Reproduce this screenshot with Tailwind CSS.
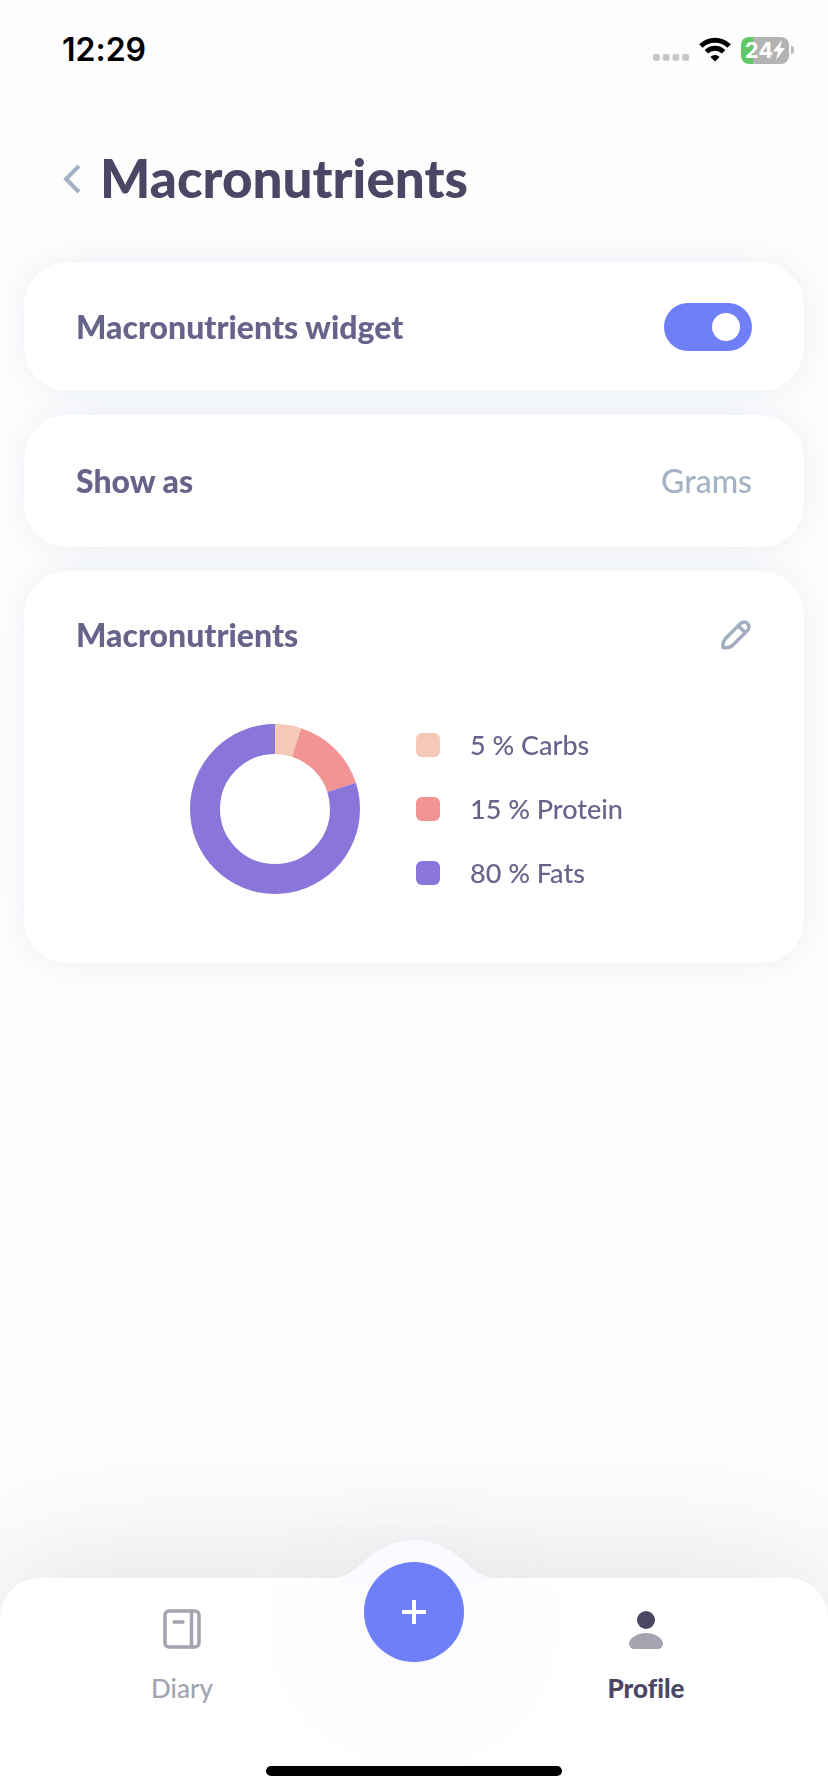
<!DOCTYPE html>
<html lang="en">
<head>
  <meta charset="UTF-8" />
  <meta name="viewport" content="width=device-width, initial-scale=1.0" />
  <title>Macronutrients</title>
  <script src="https://cdn.jsdelivr.net/npm/@tailwindcss/browser@4"></script>
</head>
<body class="bg-[#fdfdfd] font-['Lato',sans-serif] text-[#67648b] [font-variant-ligatures:none]">
  <div class="flex min-h-screen flex-col overflow-hidden">

    <!-- Status bar -->
    <div class="flex h-[100px] items-center justify-between pr-[34px] pl-[62px]">
      <time class="font-['Inter',sans-serif] text-[32px] font-semibold text-black">12:29</time>
      <div class="flex items-center gap-[10px]">
        <svg class="h-[27px] w-[36px]" viewBox="0 0 37 27" fill="#c6c6c6" aria-hidden="true">
          <rect x="0" y="17" width="7" height="7" rx="2" />
          <rect x="10" y="17" width="7" height="7" rx="2" />
          <rect x="20" y="17" width="7" height="7" rx="2" />
          <rect x="30" y="17" width="7" height="7" rx="2" />
        </svg>
        <svg class="h-[27px] w-[32px]" viewBox="0 0 32 27" fill="none" stroke="#000" aria-hidden="true">
          <path d="M1.900 9.100a20 20 0 0 1 28.200 0" stroke-width="5" />
          <path d="M7.400 14.800a12.200 12.200 0 0 1 17.200 0" stroke-width="4.800" />
          <path d="M16 24.500l-4.600-4.600a6.500 6.500 0 0 1 9.200 0z" fill="#000" stroke="none" />
        </svg>
        <div class="flex items-center gap-[2px]">
          <div class="flex h-[27px] w-[48px] items-center justify-center rounded-[8px] bg-linear-to-r from-[#60c865] from-25% to-[#b3b3b3] to-25% text-white">
            <span class="font-['Inter',sans-serif] text-[22px] leading-none font-bold">24</span>
            <svg class="h-[20px] w-[12px]" viewBox="0 0 12 20" fill="#fff" aria-hidden="true"><path d="M9 0L0 11.500h5L3 20l9-12H7z" /></svg>
          </div>
          <div class="h-[8px] w-[3px] rounded-r-full bg-[#b9b9b9]"></div>
        </div>
      </div>
    </div>

    <header class="flex h-[158px] items-center gap-[18px] px-[62px]">
      <button type="button" aria-label="Back">
        <svg class="h-[30px] w-[20px]" viewBox="0 0 20 30" fill="none" stroke="#a3b2c4" stroke-width="4"><path d="M17 2L4 15l13 13" /></svg>
      </button>
      <h1 class="pb-1 text-[53px] leading-none font-black text-[#4a4663]">Macronutrients</h1>
    </header>

    <main class="flex flex-col gap-6 px-6 pt-1 pb-20 drop-shadow-[0_0_16px_rgba(150,175,210,0.18)]">
      <section class="flex h-[129px] items-center justify-between rounded-[44px] bg-white px-[52px]">
        <label for="widget" class="text-[32px] font-black">Macronutrients widget</label>
        <span class="relative flex">
          <input id="widget" type="checkbox" role="switch" checked class="peer h-12 w-[88px] appearance-none rounded-full bg-[#c8cbd6] checked:bg-[#6f7ff8]" />
          <span class="pointer-events-none absolute top-[10px] left-3 size-7 rounded-full bg-white peer-checked:left-12"></span>
        </span>
      </section>

      <section class="flex h-[132px] items-center justify-between rounded-[44px] bg-white px-[52px]">
        <label for="unit" class="text-[32px] font-black">Show as</label>
        <select id="unit" class="field-sizing-content appearance-none bg-transparent text-right text-[32px] font-medium text-[#a3b2c4]">
          <option selected>Grams</option>
          <option>Percent</option>
        </select>
      </section>

      <section class="rounded-[44px] bg-white px-[52px] pt-[40px] pb-[69px]">
        <div class="flex h-12 items-center justify-between">
          <h2 class="text-[32px] font-black">Macronutrients</h2>
          <button type="button" aria-label="Edit macronutrients">
            <svg class="size-8" viewBox="0 0 32 32" fill="none" stroke="#a3aec0" stroke-width="3.500" stroke-linejoin="round">
              <path d="M3 28.500C2.500 24 3.500 21.500 6 19L20 5C22.500 2.500 25.500 2.500 27.500 4.500S29.500 9.500 27 12L13 26C10.500 28.500 7.500 29.300 3 28.500z" />
              <path d="M18.500 7L25 13.500" />
            </svg>
          </button>
        </div>
        <div class="mt-[65px] flex items-center justify-center gap-[56px]">
          <svg class="size-[170px] -rotate-90" viewBox="0 0 170 170" fill="none" stroke-width="30" role="img" aria-label="5% carbs, 15% protein, 80% fats">
            <circle cx="85" cy="85" r="70" stroke="#f6c8b7" pathLength="100" stroke-dasharray="5 95" />
            <circle cx="85" cy="85" r="70" stroke="#f19493" pathLength="100" stroke-dasharray="15 85" stroke-dashoffset="-5" />
            <circle cx="85" cy="85" r="70" stroke="#8a75da" pathLength="100" stroke-dasharray="80 20" stroke-dashoffset="-20" />
          </svg>
          <ul class="flex w-[222px] flex-col gap-7 text-[27px] leading-9 font-medium">
            <li class="flex items-center gap-[30px]"><span class="size-6 rounded-[6px] bg-[#f6c8b7]"></span>5 % Carbs</li>
            <li class="flex items-center gap-[30px]"><span class="size-6 rounded-[6px] bg-[#f19493]"></span>15 % Protein</li>
            <li class="flex items-center gap-[30px]"><span class="size-6 rounded-[6px] bg-[#8a75da]"></span>80 % Fats</li>
          </ul>
        </div>
      </section>
    </main>

    <!-- Tab bar, with the bump behind the add button -->
    <nav class="relative mt-auto rounded-t-[40px] bg-white pb-4 shadow-[0_0_150px_rgba(0,0,0,0.13)]">
      <svg class="absolute -top-[38px] left-1/2 h-[39px] w-[164px] -translate-x-1/2" viewBox="0 0 164 39" fill="#fdfdff" aria-hidden="true">
        <path d="M0 39V38C12 38 21 31 29 24C44 9 62 0 82 0S120 9 135 24C143 31 152 38 164 38V39z" />
      </svg>
      <div class="relative grid grid-cols-3 justify-items-center px-[66px]">
        <a href="#diary" class="flex flex-col items-center gap-[22px] pt-[30px] text-[26px] leading-8 font-medium text-[#9fa5b3]">
          <svg class="size-[42px]" viewBox="0 0 42 42" fill="none" stroke="#a4a3b0" stroke-width="3.500" stroke-linecap="round">
            <rect x="4" y="3" width="34" height="36" rx="4" />
            <path d="M30.500 3v36M13 14h9" />
          </svg>
          Diary
        </a>
        <button type="button" aria-label="Add" class="-mt-4 flex size-[100px] items-center justify-center rounded-full bg-[#6f7ff8] shadow-[0_8px_140px_rgba(100,100,250,0.12)]">
          <svg class="size-6" viewBox="0 0 24 24" stroke="#fff" stroke-width="4"><path d="M12 0v24M0 12h24" /></svg>
        </button>
        <a href="#profile" class="flex flex-col items-center gap-[22px] pt-[30px] text-[26px] leading-8 font-black text-[#4a4663]" aria-current="page">
          <svg class="size-[42px]" viewBox="0 0 42 42">
            <circle cx="21" cy="12" r="9" fill="#4a4663" />
            <path d="M21 25c8 0 17 5 17 10.500c0 3.500-2.500 5.500-6 5.500H10c-3.500 0-6-2-6-5.500C4 30 13 25 21 25z" fill="#a4a3b0" />
          </svg>
          Profile
        </a>
      </div>
      <div class="relative mx-auto mt-[62px] h-[10px] w-[296px] rounded-full bg-black"></div>
    </nav>
  </div>
</body>
</html>
